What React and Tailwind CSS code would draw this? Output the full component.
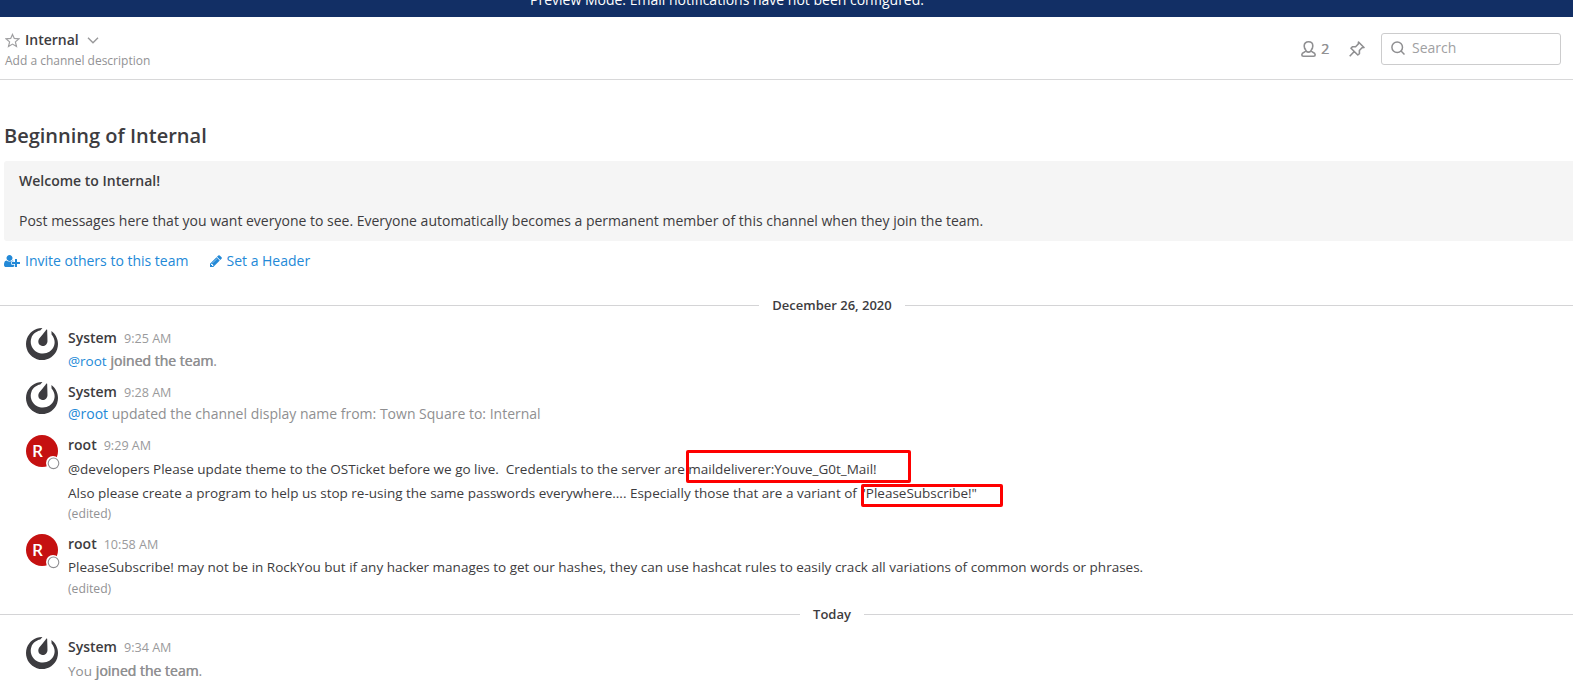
import React from 'react';
import { SiMattermost } from 'react-icons/si';

const UserPlus = () => (
  <svg className="h-[14px] w-4 shrink-0" viewBox="0 0 2048 1792" fill="currentColor">
    <path d="M704 896q-159 0-271.5-112.5t-112.5-271.5 112.5-271.5 271.5-112.5 271.5 112.5 112.5 271.5-112.5 271.5-271.5 112.5zm960 128h352q13 0 22.5 9.5t9.5 22.5v192q0 13-9.5 22.5t-22.5 9.5h-352v352q0 13-9.5 22.5t-22.5 9.5h-192q-13 0-22.5-9.5t-9.5-22.5v-352h-352q-13 0-22.5-9.5t-9.5-22.5v-192q0-13 9.5-22.5t22.5-9.5h352v-352q0-13 9.5-22.5t22.5-9.5h192q13 0 22.5 9.5t9.5 22.5v352zm-736 224q0 52 38 90t90 38h256v238q-68 50-171 50h-874q-121 0-194-69t-73-190q0-53 3.5-103.5t14-109 26.5-108.5 43-97.5 62-81 85.5-53.5 111.5-20q19 0 39 17 79 61 154.5 91.5t164.5 30.5 164.5-30.5 154.5-91.5q20-17 39-17 132 0 217 96h-223q-52 0-90 38t-38 90v192z" />
  </svg>
);

const Pencil = () => (
  <svg className="h-[14px] w-[14px] shrink-0" viewBox="0 0 1792 1792" fill="currentColor">
    <path d="M491 1536l91-91-235-235-91 91v107h128v128h107zm523-928q0-22-22-22-10 0-17 7l-542 542q-7 7-7 17 0 22 22 22 10 0 17-7l542-542q7-7 7-17zm-54-192l416 416-832 832h-416v-416zm683 96q0 53-37 90l-166 166-416-416 166-165q36-38 90-38 53 0 91 38l235 234q37 39 37 91z" />
  </svg>
);

const Divider = ({ children }) => (
  <div className="flex h-[20px] items-center text-[13px] font-semibold leading-5">
    <div className="h-px flex-1 bg-[#d4d4d6]" />
    <span className="px-[13px]">{children}</span>
    <div className="h-px flex-1 bg-[#d4d4d6]" />
  </div>
);

const Post = ({ system, time, className, children }) => (
  <div className={`flex pl-[26px] ${className}`}>
    <div className="relative mr-[10px] h-8 w-8 shrink-0">
      {system ? (
        <SiMattermost className="h-8 w-8" />
      ) : (
        <>
          <div className="flex h-8 w-8 items-center rounded-full bg-[#c51111] pb-[2px] pl-[6px] text-[17px] font-medium leading-none text-white [text-shadow:0.4px_0_0_#fff]">
            R
          </div>
          <div className="absolute -right-[2px] -bottom-[3px] flex h-[14px] w-[14px] items-center justify-center rounded-full bg-white">
            <svg className="h-[14px] w-[14px]" viewBox="0 0 14 14">
              <circle cx="7.500" cy="7.300" r="5.300" fill="#fff" stroke="#8f8f92" strokeWidth="1.1" />
            </svg>
          </div>
        </>
      )}
    </div>
    <div>
      <div className="flex h-5 items-baseline gap-[7px] leading-5">
        <span className="text-[14px] font-semibold">{system ? 'System' : 'root'}</span>
        <span className="text-[12.6px] text-[#9a9a9c]">{time}</span>
      </div>
      {children}
    </div>
  </div>
);

const Link = ({ children }) => <span className="text-[#2389d7]">{children}</span>;

const Joined = () => <span className="[text-shadow:0.5px_0_0_#8f8f91]">joined the team</span>;

export default function App() {
  return (
    <div className="h-[689px] w-[1573px] overflow-hidden bg-white font-['Open_Sans',sans-serif] text-[14px] text-[#3d3c40]">
      <div className="flex h-[17px] items-end justify-center bg-[#122f65] pr-[119px] text-[14px] text-white">
        <span className="mb-[7px] leading-5">Preview Mode: Email notifications have not been configured.</span>
      </div>

      <header className="flex h-[63px] justify-between border-b border-[#d8d8d9] pr-3 pl-[5px]">
        <div className="pt-[13px]">
          <div className="flex h-5 items-center leading-5">
            <svg className="h-[15px] w-[15px]" viewBox="0 0 15 15" fill="none" stroke="#a0a0a2" strokeWidth="1.2">
              <path d="M7.5 1.400l1.800 4 4.700.4-3.600 3.100 1.100 4.600-4-2.400-4 2.400 1.100-4.600L1 5.800l4.700-.4z" />
            </svg>
            <span className="ml-[5px] font-semibold">Internal</span>
            <svg className="ml-[8px] h-[7px] w-3" viewBox="0 0 12 7" fill="none" stroke="#98989a" strokeWidth="1.4">
              <path d="M1 .8l5 5 5-5" />
            </svg>
          </div>
          <div className="h-5 text-[12px] leading-[22px] text-[#929294]">Add a channel description</div>
        </div>
        <div className="flex pt-4 text-[#929294]">
          <div className="flex h-[31px] items-center">
            <svg className="h-4 w-[15px]" viewBox="0 0 15 16" fill="none" stroke="#8f8f91" strokeWidth="1.6" strokeLinejoin="round">
              <path d="M5 9C3.700 8 3.200 6.500 3.200 4.900 3.200 2.400 5 .8 7.500 .8s4.300 1.600 4.300 4.100c0 1.600-.5 3.100-1.800 4.100M5 9v1.200c-1.500 1-4.200 1.300-4.200 3.600 0 1 .5 1.400 1.600 1.400h10.200c1.100 0 1.600-.4 1.600-1.400 0-2.300-2.700-2.600-4.200-3.600V9M5 10.200c1.400 1.100 3.600 1.100 5 0" />
            </svg>
            <span className="ml-[5px] text-[14px] [text-shadow:0.4px_0_0_#929294]">2</span>
            <svg className="ml-[20px] h-4 w-4" viewBox="0 0 16 16" fill="none" stroke="#8f8f91" strokeWidth="1.6" strokeLinejoin="round">
              <path d="M9.500 1l5.500 5.500-2 .3-2.600 2.700v3.200L8.800 14 2 7.200l1.400-1.500h3.200L9.300 3zM5 10.800L.7 15.300" />
            </svg>
          </div>
          <div className="ml-4 flex h-8 w-[180px] items-center rounded-[3px] border border-[#cccccd] pb-[2px] pl-[9px]">
            <svg className="h-[14px] w-[14px]" viewBox="0 0 14 14" fill="none" stroke="#8f8f91" strokeWidth="1.5">
              <circle cx="6.200" cy="6.200" r="5.300" />
              <path d="M9.800 9.800l3.700 3.700" />
            </svg>
            <span className="ml-[7px] leading-5 text-[#a0a0a2]">Search</span>
          </div>
        </div>
      </header>

      <main>
        <section className="h-[215px] pt-[42px] pl-1">
          <h1 className="h-[39px] text-[20px] leading-[28px] font-semibold">Beginning of Internal</h1>
          <div className="h-20 rounded-l-[3px] bg-[#f5f5f5] pl-[15px] leading-5">
            <p className="pt-[10px] font-semibold">Welcome to Internal!</p>
            <p className="pt-5">
              Post messages here that you want everyone to see. Everyone automatically becomes a permanent member of this channel when they join the team.
            </p>
          </div>
          <div className="flex h-10 items-center leading-5 text-[#2389d7]">
            <UserPlus />
            <span className="ml-[5px]">Invite others to this team</span>
            <span className="ml-[21px] flex items-center gap-[3px]">
              <Pencil />
              Set a Header
            </span>
          </div>
        </section>

        <div className="w-[1664px]"><Divider>December 26, 2020</Divider></div>

        <Post system time="9:25 AM" className="mt-[13px] h-[54px]">
          <p className="leading-[26px] text-[#8f8f91]">
            <span className="text-[13.5px]"><Link>@root</Link></span> <Joined />.
          </p>
        </Post>
        <Post system time="9:28 AM" className="h-[53px]">
          <p className="leading-[23px] text-[#8f8f91]">
            <Link>@root</Link> updated the channel display name from: Town Square to: Internal
          </p>
        </Post>
        <Post time="9:29 AM" className="h-[99px]">
          <p className="mt-[2px] h-6 text-[13.500px] leading-6 whitespace-pre">
            @developers Please update theme to the OSTicket before we go live.{'  '}Credentials to the server are{' '}
            <span className="relative">
              maildeliverer:Youve_G0t_Mail!
              <span className="absolute -top-[10px] -left-[2px] h-[33px] w-[225px] rounded-[2px] border-3 border-[#fe0000]" />
            </span>
          </p>
          <p className="h-6 text-[13.500px] leading-6 whitespace-pre">
            Also please create a program to help us stop re-using the same passwords everywhere.... Especially those that are a variant of{' '}
            <span className="relative">
              "PleaseSubscribe!"
              <span className="absolute top-0 left-px h-[23px] w-[142px] rounded-[2px] border-3 border-[#fe0000]" />
            </span>
          </p>
          <p className="text-[12.200px] leading-[18px] text-[#929294]">(edited)</p>
        </Post>
        <Post time="10:58 AM" className="h-[70px]">
          <p className="mt-[1px] h-6 text-[13.500px] leading-6">
            PleaseSubscribe! may not be in RockYou but if any hacker manages to get our hashes, they can use hashcat rules to easily crack all variations of common words or phrases.
          </p>
          <p className="text-[12.200px] leading-5 text-[#929294]">(edited)</p>
        </Post>

        <div className="w-[1664px]"><Divider>Today</Divider></div>

        <Post system time="9:34 AM" className="mt-[13px]">
          <p className="mt-[1px] leading-[26px] text-[#8f8f91]">
            <span className="text-[13.500px]">You</span> <Joined />.
          </p>
        </Post>
      </main>
    </div>
  );
}
